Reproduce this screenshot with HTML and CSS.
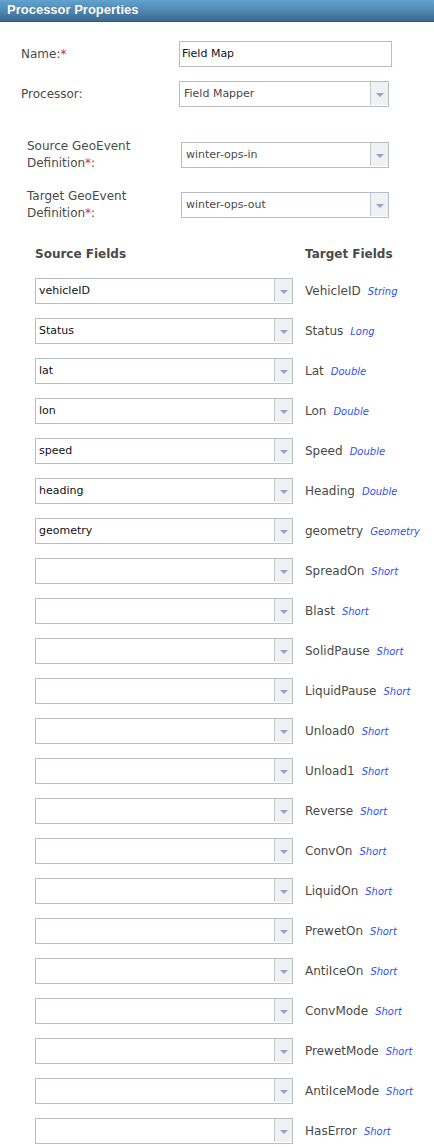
FILE: index.html
```html
<!DOCTYPE html>
<html>
<head>
<meta charset="utf-8">
<link rel="stylesheet" href="styles.css">
</head>
<body>
<div class="header">Processor Properties</div>
<div class="form">
  <div class="prow name-row">
    <div class="plabel">Name:<span class="req">*</span></div>
    <div class="textbox">Field Map</div>
  </div>
  <div class="prow proc-row">
    <div class="plabel">Processor:</div>
    <div class="combo w210"><span class="val">Field Mapper</span><span class="btn"><span class="tri"></span></span></div>
  </div>
  <div class="prow def-row src-def">
    <div class="plabel dlabel">Source GeoEvent Definition<span class="req">*</span>:</div>
    <div class="combo w208"><span class="val">winter-ops-in</span><span class="btn"><span class="tri"></span></span></div>
  </div>
  <div class="prow def-row tgt-def">
    <div class="plabel dlabel">Target GeoEvent Definition<span class="req">*</span>:</div>
    <div class="combo w208"><span class="val">winter-ops-out</span><span class="btn"><span class="tri"></span></span></div>
  </div>
</div>
<div class="fields">
  <div class="fhead"><span class="fh-src">Source Fields</span><span class="fh-tgt">Target Fields</span></div>
  <div class="frow"><div class="combo fsel"><span class="val">vehicleID</span><span class="btn"><span class="tri"></span></span></div><div class="tgt">VehicleID<span class="type">String</span></div></div>
  <div class="frow"><div class="combo fsel"><span class="val">Status</span><span class="btn"><span class="tri"></span></span></div><div class="tgt">Status<span class="type">Long</span></div></div>
  <div class="frow"><div class="combo fsel"><span class="val">lat</span><span class="btn"><span class="tri"></span></span></div><div class="tgt">Lat<span class="type">Double</span></div></div>
  <div class="frow"><div class="combo fsel"><span class="val">lon</span><span class="btn"><span class="tri"></span></span></div><div class="tgt">Lon<span class="type">Double</span></div></div>
  <div class="frow"><div class="combo fsel"><span class="val">speed</span><span class="btn"><span class="tri"></span></span></div><div class="tgt">Speed<span class="type">Double</span></div></div>
  <div class="frow"><div class="combo fsel"><span class="val">heading</span><span class="btn"><span class="tri"></span></span></div><div class="tgt">Heading<span class="type">Double</span></div></div>
  <div class="frow"><div class="combo fsel"><span class="val">geometry</span><span class="btn"><span class="tri"></span></span></div><div class="tgt">geometry<span class="type">Geometry</span></div></div>
  <div class="frow"><div class="combo fsel"><span class="val"></span><span class="btn"><span class="tri"></span></span></div><div class="tgt">SpreadOn<span class="type">Short</span></div></div>
  <div class="frow"><div class="combo fsel"><span class="val"></span><span class="btn"><span class="tri"></span></span></div><div class="tgt">Blast<span class="type">Short</span></div></div>
  <div class="frow"><div class="combo fsel"><span class="val"></span><span class="btn"><span class="tri"></span></span></div><div class="tgt">SolidPause<span class="type">Short</span></div></div>
  <div class="frow"><div class="combo fsel"><span class="val"></span><span class="btn"><span class="tri"></span></span></div><div class="tgt">LiquidPause<span class="type">Short</span></div></div>
  <div class="frow"><div class="combo fsel"><span class="val"></span><span class="btn"><span class="tri"></span></span></div><div class="tgt">Unload0<span class="type">Short</span></div></div>
  <div class="frow"><div class="combo fsel"><span class="val"></span><span class="btn"><span class="tri"></span></span></div><div class="tgt">Unload1<span class="type">Short</span></div></div>
  <div class="frow"><div class="combo fsel"><span class="val"></span><span class="btn"><span class="tri"></span></span></div><div class="tgt">Reverse<span class="type">Short</span></div></div>
  <div class="frow"><div class="combo fsel"><span class="val"></span><span class="btn"><span class="tri"></span></span></div><div class="tgt">ConvOn<span class="type">Short</span></div></div>
  <div class="frow"><div class="combo fsel"><span class="val"></span><span class="btn"><span class="tri"></span></span></div><div class="tgt">LiquidOn<span class="type">Short</span></div></div>
  <div class="frow"><div class="combo fsel"><span class="val"></span><span class="btn"><span class="tri"></span></span></div><div class="tgt">PrewetOn<span class="type">Short</span></div></div>
  <div class="frow"><div class="combo fsel"><span class="val"></span><span class="btn"><span class="tri"></span></span></div><div class="tgt">AntiIceOn<span class="type">Short</span></div></div>
  <div class="frow"><div class="combo fsel"><span class="val"></span><span class="btn"><span class="tri"></span></span></div><div class="tgt">ConvMode<span class="type">Short</span></div></div>
  <div class="frow"><div class="combo fsel"><span class="val"></span><span class="btn"><span class="tri"></span></span></div><div class="tgt">PrewetMode<span class="type">Short</span></div></div>
  <div class="frow"><div class="combo fsel"><span class="val"></span><span class="btn"><span class="tri"></span></span></div><div class="tgt">AntiIceMode<span class="type">Short</span></div></div>
  <div class="frow"><div class="combo fsel"><span class="val"></span><span class="btn"><span class="tri"></span></span></div><div class="tgt">HasError<span class="type">Short</span></div></div>
</div>
</body>
</html>
```
FILE: styles.css
```css
html, body {
  margin: 0;
  padding: 0;
  background: #ffffff;
}
body {
  font-family: "DejaVu Sans", Verdana, sans-serif;
  font-size: 12px;
  color: #4a4a4a;
  width: 434px;
}
.header {
  height: 22px;
  box-sizing: border-box;
  padding-left: 7px;
  line-height: 20px;
  font-family: "Liberation Sans", Arial, sans-serif;
  font-weight: bold;
  font-size: 13px;
  color: #ffffff;
  text-shadow: 0 0 1px rgba(0,0,0,0.25);
  background: linear-gradient(to bottom, #62a3cf 0%, #4f88b4 50%, #3b6891 100%);
  border-bottom: 1px solid #33597c;
}
.form {
  padding-top: 19px;
}
.prow {
  display: flex;
  align-items: center;
}
.name-row, .proc-row {
  padding-left: 21px;
}
.name-row .plabel, .proc-row .plabel {
  width: 158px;
}
.proc-row {
  margin-top: 14px;
}
.def-row {
  padding-left: 27px;
}
.src-def {
  margin-top: 31px;
}
.tgt-def {
  margin-top: 16px;
}
.dlabel {
  width: 154px;
  line-height: 17px;
  padding-right: 30px;
  box-sizing: border-box;
}
.plabel {
  flex: none;
}
.req {
  color: #e8262a;
}
.textbox {
  width: 213px;
  height: 26px;
  box-sizing: border-box;
  border: 1px solid #b7bcc8;
  padding-left: 2px;
  font-size: 11px;
  line-height: 24px;
  color: #111111;
}
.combo {
  position: relative;
  height: 26px;
  box-sizing: border-box;
  border: 1px solid #b7bcc8;
  display: flex;
  background: #ffffff;
}
.w210 { width: 210px; }
.w208 { width: 208px; }
.combo .val {
  flex: 1;
  padding-left: 4px;
  font-size: 11px;
  line-height: 24px;
  color: #4a4a4a;
}
.combo .btn {
  flex: none;
  width: 18px;
  height: 23px;
  box-sizing: border-box;
  border-left: 1px solid #c3c7cf;
  background: #f0f1f3;
  display: flex;
  align-items: center;
  justify-content: center;
}
.tri {
  width: 0;
  height: 0;
  border-left: 4px solid transparent;
  border-right: 4px solid transparent;
  border-top: 4px solid #91a6c8;
  margin-top: 2px;
}
.fields {
  padding-left: 35px;
  padding-top: 25px;
}
.fhead {
  display: flex;
  font-weight: bold;
  font-size: 12px;
  line-height: 15px;
  color: #4a4a4a;
}
.fh-src {
  width: 270px;
}
.frow {
  display: flex;
  align-items: center;
  margin-top: 14px;
}
.fhead + .frow {
  margin-top: 16px;
}
.fsel {
  width: 258px;
  flex: none;
}
.fsel .val {
  padding-left: 3px;
  color: #111111;
}
.tgt {
  margin-left: 12px;
  color: #4a4a4a;
  white-space: nowrap;
}
.type {
  margin-left: 7px;
  font-size: 10px;
  font-style: italic;
  color: #2f4ff2;
}
```
